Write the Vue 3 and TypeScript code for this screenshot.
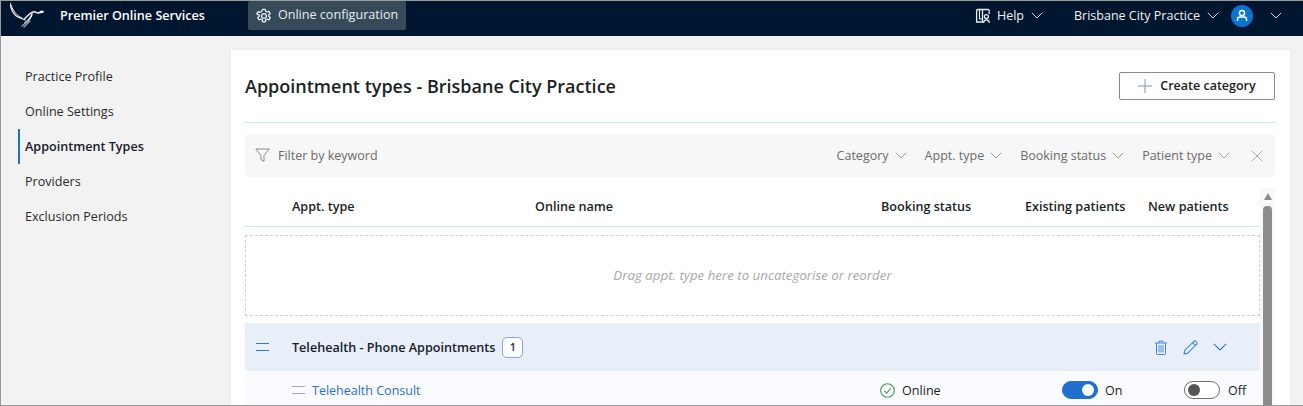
<script setup lang="ts">
const navItems = [
  { label: 'Practice Profile', active: false },
  { label: 'Online Settings', active: false },
  { label: 'Appointment Types', active: true },
  { label: 'Providers', active: false },
  { label: 'Exclusion Periods', active: false },
];

const filters = ['Category', 'Appt. type', 'Booking status', 'Patient type'];
</script>

<template>
  <div class="page">
    <header class="topbar">
      <svg class="logo" width="44" height="28" viewBox="0 0 44 28" fill="none" stroke="#eef1f4" stroke-linecap="round">
        <path d="M0 1 C1 7 4 13 8 15 C10 16 13 17 15 18" stroke-width="1.3" />
        <path d="M1 3 C3 9 7 14 12 16" stroke-width="1" />
        <path d="M14 17 C17 15 19 11 23 10 C25 9 27 11 28 11 L33 10 C34 9 31 9 30 10" stroke-width="1.4" />
        <path d="M22 12 C21 16 18 19 15 21" stroke-width="1.6" />
        <path d="M18 19 L12 24 M20 19 L14 25" stroke-width="1.2" stroke="#9aa5b2" />
      </svg>
      <span class="brand">Premier Online Services</span>
      <div class="config-tab">
        <svg width="16" height="16" viewBox="0 0 16 16" fill="none" stroke="#e6ebf0" stroke-width="1.3">
          <path d="M6.7 1.3h2.6l.4 2 1.3.7 1.9-.7 1.3 2.3-1.5 1.3v1.4l1.5 1.3-1.3 2.3-1.9-.7-1.3.7-.4 2H6.7l-.4-2-1.3-.7-1.9.7-1.3-2.3 1.5-1.3V7.2L.8 5.9l1.3-2.3 1.9.7 1.3-.7z" stroke-linejoin="round" />
          <circle cx="8" cy="8" r="2.4" />
        </svg>
        <span>Online configuration</span>
      </div>
      <div class="topbar-right">
        <svg class="help-icon" width="16" height="16" viewBox="0 0 16 16" fill="none" stroke="#e6ebf0" stroke-width="1.3">
          <path d="M7.5 14H1.6V2.8C1.6 2 2.2 1.5 3 1.5H7.5zM7.5 1.5H13c.8 0 1.2.5 1.2 1.2V6" />
          <path d="M4.5 1.5V11H7.5" stroke-width="1.1" />
          <circle cx="11.4" cy="8.6" r="2" />
          <path d="M8.6 15c0-2 1.1-3.2 2.8-3.2s2.9 1.2 2.9 3.2" />
        </svg>
        <span class="help-label">Help</span>
        <svg class="chev" width="12" height="7" viewBox="0 0 12 7" fill="none" stroke="#d5dce3" stroke-width="1"><path d="M.8.8 6 6l5.2-5.2" /></svg>
        <span class="practice-label">Brisbane City Practice</span>
        <svg class="chev" width="12" height="7" viewBox="0 0 12 7" fill="none" stroke="#d5dce3" stroke-width="1"><path d="M.8.8 6 6l5.2-5.2" /></svg>
        <span class="avatar">
          <svg width="12" height="13" viewBox="0 0 12 13" fill="none" stroke="#fff" stroke-width="1.5">
            <circle cx="6" cy="4" r="2.6" />
            <path d="M1.5 12V10.5A2.5 2.5 0 0 1 4 8h4a2.5 2.5 0 0 1 2.5 2.5V12" />
          </svg>
        </span>
        <svg class="chev last-chev" width="12" height="7" viewBox="0 0 12 7" fill="none" stroke="#d5dce3" stroke-width="1"><path d="M.8.8 6 6l5.2-5.2" /></svg>
      </div>
    </header>

    <div class="body-row">
      <nav class="sidenav">
        <a v-for="item in navItems" :key="item.label" class="nav-item" :class="{ 'nav-item--active': item.active }">{{ item.label }}</a>
      </nav>

      <main class="card">
        <div class="title-row">
          <h1>Appointment types - Brisbane City Practice</h1>
          <button class="create-btn">
            <svg width="14" height="14" viewBox="0 0 14 14" stroke="#7d97b8" stroke-width="1"><path d="M7 0v14M0 7h14" /></svg>
            <span>Create category</span>
          </button>
        </div>

        <div class="filter-bar">
          <svg width="15" height="15" viewBox="0 0 15 15" fill="none" stroke="#8a8a8a" stroke-width="1"><path d="M.8 1h13.4L9 7.5v5.8l-3-1.6V7.5z" stroke-linejoin="round" /></svg>
          <span class="filter-text">Filter by keyword</span>
          <div class="filter-drops">
            <span v-for="f in filters" :key="f" class="filter-drop">
              {{ f }}
              <svg width="12" height="7" viewBox="0 0 12 7" fill="none" stroke="#9a9a9a" stroke-width="1"><path d="M.8.8 6 6l5.2-5.2" /></svg>
            </span>
            <svg class="filter-clear" width="12" height="12" viewBox="0 0 12 12" stroke="#a8a8a8" stroke-width="1"><path d="M.8.8l10.4 10.4M11.2.8.8 11.2" /></svg>
          </div>
        </div>

        <div class="table-wrap">
          <div class="table-main">
            <div class="row head-row">
              <span></span>
              <span>Appt. type</span>
              <span>Online name</span>
              <span>Booking status</span>
              <span>Existing patients</span>
              <span>New patients</span>
            </div>

            <div class="dropzone">Drag appt. type here to uncategorise or reorder</div>

            <div class="category-row">
              <span class="drag drag--blue"></span>
              <span class="cat-name">Telehealth - Phone Appointments</span>
              <span class="count">1</span>
              <div class="cat-actions">
                <svg width="12" height="15" viewBox="0 0 12 15" fill="none" stroke="#3f86d8" stroke-width="1">
                  <path d="M0 3h12M4 3V1h4v2M1.5 3v10.5a1 1 0 0 0 1 1h7a1 1 0 0 0 1-1V3" />
                  <path d="M4 5v7.5M6 5v7.5M8 5v7.5" stroke-width="1.2" stroke="#6b9fdc" />
                </svg>
                <svg class="pencil" width="15" height="15" viewBox="0 0 15 15" fill="none" stroke="#3f86d8" stroke-width="1.1">
                  <path d="M1 14l.9-3.8L10.8 1.3a1.4 1.4 0 0 1 2 0l.9.9a1.4 1.4 0 0 1 0 2L4.8 13.1zM9.6 2.5l2.9 2.9" stroke-linejoin="round" />
                </svg>
                <svg class="cat-chev" width="14" height="8" viewBox="0 0 14 8" fill="none" stroke="#2a78cf" stroke-width="1.1"><path d="M.8.8 7 7l6.2-6.2" /></svg>
              </div>
            </div>

            <div class="row item-row">
              <span></span>
              <span class="item-name"><span class="drag drag--grey"></span><a>Telehealth Consult</a></span>
              <span></span>
              <span class="status">
                <svg width="15" height="15" viewBox="0 0 15 15" fill="none"><circle cx="7.5" cy="7.5" r="6.8" stroke="#3f9a58" stroke-width="1.1" /><path d="M4.3 7.8l2.3 2.3 4.1-4.6" stroke="#3f9a58" stroke-width="1.1" /></svg>
                Online
              </span>
              <span class="toggle-cell"><span class="toggle toggle--on"><i></i></span>On</span>
              <span class="toggle-cell toggle-cell--off"><span class="toggle"><i></i></span>Off</span>
            </div>
          </div>
          <div class="scrollbar">
            <span class="scroll-arrow"></span>
            <span class="scroll-thumb"></span>
          </div>
        </div>
      </main>
    </div>
  </div>
</template>

<style scoped>
.page {
  height: 404px;
  border-top: 1px solid #9a9a9a;
  border-bottom: 1px solid #9a9a9a;
  border-left: 1px solid #9a9a9a;
  display: flex;
  flex-direction: column;
  overflow: hidden;
  background: #f2f2f2;
  font-family: "Open Sans", sans-serif;
  font-size: 12.6px;
  color: #1b1b1b;
}

.topbar {
  flex: none;
  height: 35px;
  box-sizing: border-box;
  padding: 0 0 6px 9px;
  background: #00162e;
  color: #fff;
  display: flex;
  align-items: center;
}

.logo {
  flex: none;
}

.brand {
  margin-left: 6px;
  font-weight: 600;
  font-size: 12.6px;
}

.config-tab {
  margin-left: 43px;
  height: 29px;
  width: 158px;
  box-sizing: border-box;
  background: #364a5a;
  border-radius: 2px;
  padding-left: 8px;
  display: flex;
  align-items: center;
  gap: 6px;
  color: #e8edf2;
}

.config-tab span {
  margin-bottom: 2px;
}

.topbar-right {
  margin-left: auto;
  display: flex;
  align-items: center;
  color: #f0f3f6;
  padding-right: 21px;
  font-size: 12.5px;
}

.help-label {
  margin-left: 6px;
}

.chev {
  margin-left: 7px;
}

.practice-label {
  margin-left: 31px;
}

.avatar {
  margin-left: 12px;
  width: 22px;
  height: 22px;
  border-radius: 50%;
  background: #0b73d1;
  display: flex;
  align-items: center;
  justify-content: center;
}

.last-chev {
  margin-left: 17px;
}

.body-row {
  flex: 1;
  min-height: 0;
  display: flex;
}

.sidenav {
  flex: none;
  width: 230px;
  padding: 23px 0 0 17px;
  box-sizing: border-box;
  display: flex;
  flex-direction: column;
}

.nav-item {
  height: 35px;
  line-height: 35px;
  padding-left: 5px;
  border-left: 2px solid transparent;
  color: #2a2a2a;
}

.nav-item--active {
  border-left-color: #1f6fd0;
  font-weight: 600;
  color: #16202b;
}

.card {
  flex: none;
  width: 1059px;
  margin-top: 14px;
  background: #fff;
  padding: 0 15px 0 14px;
  box-sizing: border-box;
  box-shadow: 0 0 3px rgba(0, 0, 0, 0.06);
  display: flex;
  flex-direction: column;
  min-height: 0;
}

.title-row {
  flex: none;
  height: 72px;
  border-bottom: 1px solid #cde9e9;
  display: flex;
  align-items: center;
  justify-content: space-between;
}

h1 {
  margin: 0;
  font-size: 18px;
  font-weight: 600;
  color: #1a1f26;
}

.create-btn {
  width: 156px;
  height: 28px;
  background: #fff;
  border: 1px solid #8a8a8a;
  border-radius: 2px;
  display: flex;
  align-items: center;
  justify-content: center;
  gap: 8px;
  font: 600 12.5px "Open Sans", sans-serif;
  color: #1b1b1b;
  padding: 0;
}

.create-btn span {
  margin-bottom: 2px;
}

.filter-bar {
  flex: none;
  margin-top: 11px;
  height: 43px;
  background: #f7f7f7;
  border-radius: 4px;
  display: flex;
  align-items: center;
  padding: 0 12px 0 10px;
  color: #6b6b6b;
  font-size: 12.5px;
}

.filter-text {
  margin-left: 8px;
}

.filter-drops {
  margin-left: auto;
  display: flex;
  align-items: center;
  gap: 18px;
}

.filter-drop {
  display: flex;
  align-items: center;
  gap: 6px;
}

.filter-clear {
  margin-left: 3px;
}

.table-wrap {
  flex: 1;
  min-height: 0;
  display: flex;
  margin-top: 11px;
}

.table-main {
  width: 1015px;
  flex: none;
  display: flex;
  flex-direction: column;
}

.row {
  display: grid;
  grid-template-columns: 47px 243px 346px 144px 123px 112px;
  align-items: center;
}

.head-row {
  flex: none;
  height: 37px;
  padding-bottom: 1px;
  border-bottom: 1px solid #cde9e9;
  font-weight: 600;
  color: #1a1f26;
}

.dropzone {
  flex: none;
  margin-top: 8px;
  height: 81px;
  box-sizing: border-box;
  padding-bottom: 2px;
  border: 1px dashed #c3d2ea;
  display: flex;
  align-items: center;
  justify-content: center;
  font-style: italic;
  font-size: 13.3px;
  color: #a8a8a8;
}

.category-row {
  flex: none;
  margin-top: 7px;
  height: 48px;
  background: #e8eff9;
  display: flex;
  align-items: center;
  padding-left: 11px;
}

.drag {
  display: block;
  flex: none;
  width: 13px;
  height: 6px;
  border-top: 1px solid;
  border-bottom: 1px solid;
}

.drag--blue {
  border-color: #2a78cf;
}

.drag--grey {
  border-color: #a8a8a8;
}

.cat-name {
  margin-left: 23px;
  font-weight: 600;
  color: #16202b;
}

.count {
  margin-left: 7px;
  width: 21px;
  height: 21px;
  box-sizing: border-box;
  border: 1px solid #7fa6dd;
  border-radius: 5px;
  background: #fff;
  display: flex;
  align-items: center;
  justify-content: center;
  font-size: 10px;
  font-weight: 600;
}

.cat-actions {
  margin-left: auto;
  padding-right: 33px;
  display: flex;
  align-items: center;
}

.pencil {
  margin-left: 16px;
}

.cat-chev {
  margin-left: 15px;
}

.item-row {
  flex: none;
  margin-top: 1px;
  height: 36px;
  background: #f9fbff;
}

.item-name {
  display: flex;
  align-items: center;
  gap: 7px;
  font-size: 12.5px;
}

.item-name a {
  color: #2a70c8;
}

.status {
  display: flex;
  align-items: center;
  gap: 7px;
  margin-left: -1px;
  font-size: 12.6px;
}

.toggle-cell {
  display: flex;
  align-items: center;
  gap: 7px;
  margin-left: 37px;
  font-size: 12.5px;
}

.toggle-cell--off {
  margin-left: 36px;
  gap: 8px;
}

.toggle {
  width: 36px;
  height: 18px;
  box-sizing: border-box;
  border-radius: 9px;
  border: 1px solid #6f6f6f;
  background: #fff;
  display: flex;
  align-items: center;
  padding: 0 3px;
}

.toggle i {
  width: 12px;
  height: 12px;
  border-radius: 50%;
  background: #555;
}

.toggle--on {
  background: #1f6fd0;
  border-color: #1f6fd0;
  justify-content: flex-end;
}

.toggle--on i {
  background: #fff;
}

.scrollbar {
  flex: none;
  width: 15px;
  background: #f8f8f8;
  display: flex;
  flex-direction: column;
  align-items: center;
  box-sizing: border-box;
  padding-top: 5px;
}

.scroll-arrow {
  flex: none;
  width: 0;
  height: 0;
  border-left: 4.5px solid transparent;
  border-right: 4.5px solid transparent;
  border-bottom: 7px solid #8c8c8c;
}

.scroll-thumb {
  flex: 1;
  width: 9px;
  margin-top: 6px;
  border-radius: 4px 4px 0 0;
  background: #8c8c8c;
}
</style>

<style>
html, body {
  margin: 0;
  height: 406px;
  overflow: hidden;
  background: #f2f2f2;
}
</style>
